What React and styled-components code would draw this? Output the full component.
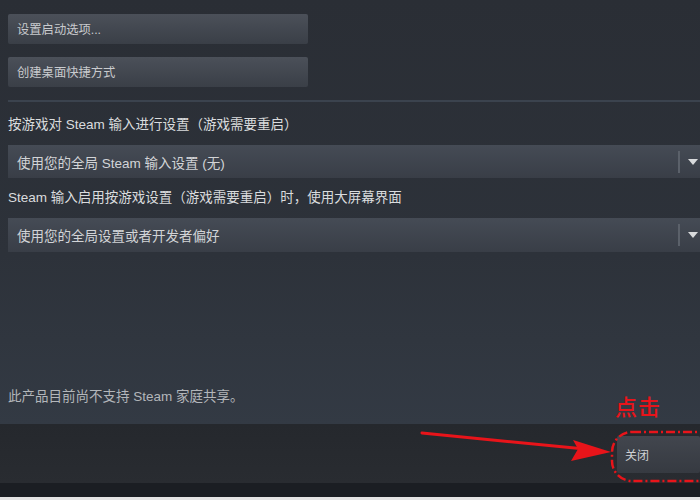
import styled, { createGlobalStyle } from "styled-components"

const Global = createGlobalStyle`
    html, body { margin: 0; padding: 0; background: #1c1f24; }
    body { width: 700px; height: 500px; overflow: hidden; font-family: "Liberation Sans", "Noto Sans CJK SC", sans-serif; }
`

const Page = styled.div`
    position: relative;
    width: 700px;
    height: 500px;
    display: flex;
    flex-direction: column;
    overflow: hidden;
`

const Panel = styled.div`
    height: 424px;
    box-sizing: border-box;
    padding: 14px 0 0 8px;
    display: flex;
    flex-direction: column;
    background: linear-gradient(to bottom, #2a2e35 0%, #2d323a 60%, #333a44 100%);
`

const ActionButton = styled.div`
    width: 300px;
    height: 30px;
    box-sizing: border-box;
    padding-left: 9px;
    display: flex;
    align-items: center;
    margin-bottom: ${p => p.$gap || 0}px;
    font-size: 12.3px;
    color: #c9cbce;
    border-radius: 2px;
    background: linear-gradient(to bottom, #4b5059 0%, #3a3f47 100%);
`

const Divider = styled.div`
    height: 2px;
    margin-top: 13px;
    background: #3b434e;
`

const Label = styled.div`
    height: 18px;
    line-height: 18px;
    font-size: 13.5px;
    color: #dadcde;
    margin-top: ${p => p.$top}px;
`

const Dropdown = styled.div`
    height: ${p => p.$h}px;
    margin-top: 11px;
    margin-right: -20px;
    box-sizing: border-box;
    padding-left: 9px;
    display: flex;
    align-items: center;
    font-size: 13.5px;
    color: #d2d4d7;
    background: linear-gradient(to bottom, #454b55 0%, #393e47 100%);
`

const DropText = styled.span`
    flex: 1;
`

const DropSep = styled.div`
    width: 2px;
    height: 22px;
    background: #5b616a;
    margin-right: 8px;
`

const DropArrow = styled.svg`
    width: 10px;
    height: 6px;
    margin-right: 22px;
`

const Spacer = styled.div`
    flex: 1;
`

const Note = styled.div`
    height: 18px;
    line-height: 18px;
    font-size: 13.5px;
    color: #b3b6ba;
    margin-bottom: 18px;
`

const Footer = styled.div`
    height: 59px;
    display: flex;
    align-items: center;
    justify-content: flex-end;
    background: linear-gradient(to bottom, #25282d 0%, #292c31 100%);
`

const CloseButton = styled.div`
    width: 83px;
    height: 37px;
    box-sizing: border-box;
    padding-left: 8px;
    display: flex;
    align-items: center;
    font-size: 12px;
    color: #d0d2d5;
    border-radius: 2px;
    background: linear-gradient(to bottom, #42464e 0%, #363a41 100%);
    margin-top: 1px;
`

const BottomBar = styled.div`
    height: 14px;
    background: #1b1e23;
`

const Taskbar = styled.div`
    height: 3px;
    background: #e4e4e4;
`

const Overlay = styled.svg`
    position: absolute;
    left: 0;
    top: 0;
    pointer-events: none;
`

const Hint = styled.div`
    position: absolute;
    left: 615px;
    top: 392px;
    font-size: 22px;
    line-height: 26px;
    font-weight: 500;
    color: #e8141a;
    font-family: "Noto Sans CJK SC", sans-serif;
    letter-spacing: 1px;
`

function Select({ text, h }) {
    return (
        <Dropdown $h={h}>
            <DropText>{text}</DropText>
            <DropSep />
            <DropArrow viewBox="0 0 10 6"><path d="M0 0 L10 0 L5 6 Z" fill="#d8dadc" /></DropArrow>
        </Dropdown>
    )
}

export default function App() {
    return (
        <Page>
            <Global />
            <Panel>
                <ActionButton $gap={13}>设置启动选项...</ActionButton>
                <ActionButton>创建桌面快捷方式</ActionButton>
                <Divider />
                <Label $top={14}>按游戏对 Steam 输入进行设置（游戏需要重启）</Label>
                <Select text="使用您的全局 Steam 输入设置 (无)" h={33} />
                <Label $top={11}>Steam 输入启用按游戏设置（游戏需要重启）时，使用大屏幕界面</Label>
                <Select text="使用您的全局设置或者开发者偏好" h={34} />
                <Spacer />
                <Note>此产品目前尚不支持 Steam 家庭共享。</Note>
            </Panel>
            <Footer>
                <CloseButton>关闭</CloseButton>
            </Footer>
            <BottomBar />
            <Taskbar />
            <Overlay width="700" height="500" viewBox="0 0 700 500">
                <rect x="612" y="432" width="120" height="49" rx="20" fill="none" stroke="#e8141a" strokeWidth="2.5" strokeDasharray="9 3 2 3" />
                <line x1="422" y1="433" x2="585" y2="449" stroke="#e8141a" strokeWidth="3" strokeLinecap="round" />
                <path d="M611 452 L573 440 L578 449 L571 461 Z" fill="#e8141a" />
            </Overlay>
            <Hint>点击</Hint>
        </Page>
    )
}
